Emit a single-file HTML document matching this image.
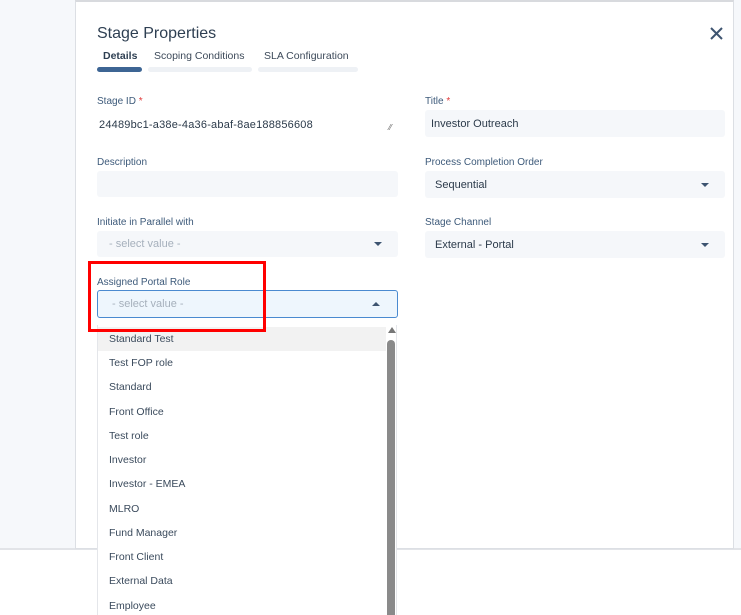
<!DOCTYPE html>
<html><head><style>
*{margin:0;padding:0;box-sizing:border-box}
body{width:741px;height:613px;position:relative;overflow:hidden;background:#fff;font-family:"Liberation Sans",sans-serif;color:#2b3a4a}
.abs{position:absolute}
.lbl{position:absolute;font-size:10px;color:#3d5a7a}
.req{color:#e03a3a}
.fld{position:absolute;background:#f5f7fa;border-radius:3px;font-size:11px;color:#2b3a4a;padding-left:10px;display:flex;align-items:center}
.caret{position:absolute;right:16px;top:50%;margin-top:-2px;width:0;height:0;border-left:4px solid transparent;border-right:4px solid transparent;border-top:4px solid #3d5470}
.item{position:absolute;left:0;width:288px;height:24px;font-size:10.5px;color:#3a4a5c;padding-left:11px;display:flex;align-items:center}
</style></head><body>
<div class="abs" style="left:0;top:0;width:741px;height:549px;background:#f6f8fb"></div>
<div class="abs" style="left:0;top:548px;width:741px;height:2px;background:#e2e4e8"></div>
<div class="abs" style="left:75px;top:0;width:659px;height:549px;background:#fff;border:1px solid #dcdfe4;border-top:2px solid #d8dade"></div>
<div class="abs" style="left:97px;top:25px;font-size:16px;color:#2e3f52">Stage Properties</div>
<svg class="abs" style="left:710px;top:27px" width="13" height="13" viewBox="0 0 13 13"><path d="M1 1L12 12M12 1L1 12" stroke="#3d5470" stroke-width="2"/></svg>
<div class="abs" style="left:103px;top:50px;font-size:10.5px;font-weight:bold;color:#2e3f52">Details</div>
<div class="abs" style="left:154px;top:50px;font-size:10.5px;color:#3d4a5a">Scoping Conditions</div>
<div class="abs" style="left:264px;top:50px;font-size:10.5px;color:#3d4a5a">SLA Configuration</div>
<div class="abs" style="left:97px;top:67px;width:45px;height:5px;border-radius:3px;background:#3d6594"></div>
<div class="abs" style="left:148px;top:67px;width:104px;height:5px;border-radius:3px;background:#eef1f5"></div>
<div class="abs" style="left:258px;top:67px;width:100px;height:5px;border-radius:3px;background:#eef1f5"></div>

<div class="lbl" style="left:97px;top:96px">Stage ID <span class="req">*</span></div>
<div class="abs" style="left:99px;top:119px;font-size:11px;color:#2b3a4a;letter-spacing:0.2px">24489bc1-a38e-4a36-abaf-8ae188856608</div>
<div class="abs" style="left:389px;top:123px;font-size:8px;color:#666">⁄⁄</div>
<div class="lbl" style="left:425px;top:96px">Title <span class="req">*</span></div>
<div class="fld" style="left:425px;top:110px;width:300px;height:27px;padding-left:6px">Investor Outreach</div>

<div class="lbl" style="left:97px;top:157px">Description</div>
<div class="fld" style="left:97px;top:171px;width:301px;height:26px"></div>
<div class="lbl" style="left:425px;top:157px">Process Completion Order</div>
<div class="fld" style="left:425px;top:171px;width:300px;height:27px">Sequential<span class="caret"></span></div>

<div class="lbl" style="left:97px;top:217px">Initiate in Parallel with</div>
<div class="fld" style="left:97px;top:231px;width:301px;height:26px;color:#a6b0bc;padding-left:12px">- select value -<span class="caret"></span></div>
<div class="lbl" style="left:425px;top:217px">Stage Channel</div>
<div class="fld" style="left:425px;top:231px;width:300px;height:27px">External - Portal<span class="caret"></span></div>

<div class="lbl" style="left:97px;top:277px">Assigned Portal Role</div>
<div class="fld" style="left:97px;top:290px;width:301px;height:28px;background:#eef6fd;border:1px solid #4a8ad0;color:#a6b0bc;padding-left:14px">- select value -<span class="caret" style="border-top:none;border-bottom:4px solid #3d5470;right:17px"></span></div>

<div class="abs" style="left:97px;top:325px;width:300px;height:290px;background:#fff;border-left:1px solid #e4e6ea;border-right:1px solid #e4e6ea;overflow:hidden">
<div class="item" style="top:2px;background:#f2f2f2">Standard Test</div>
<div class="item" style="top:26px">Test FOP role</div>
<div class="item" style="top:50px">Standard</div>
<div class="item" style="top:75px">Front Office</div>
<div class="item" style="top:99px">Test role</div>
<div class="item" style="top:123px">Investor</div>
<div class="item" style="top:147px">Investor - EMEA</div>
<div class="item" style="top:172px">MLRO</div>
<div class="item" style="top:196px">Fund Manager</div>
<div class="item" style="top:220px">Front Client</div>
<div class="item" style="top:244px">External Data</div>
<div class="item" style="top:269px">Employee</div>
<div class="abs" style="left:290px;top:2px;width:0;height:0;border-left:4px solid transparent;border-right:4px solid transparent;border-bottom:6px solid #777"></div>
<div class="abs" style="left:289px;top:15px;width:8px;height:280px;border-radius:4px;background:#8a8a8a"></div>
</div>

<div class="abs" style="left:88px;top:261px;width:178px;height:71px;border:3px solid #f00"></div>
</body></html>
